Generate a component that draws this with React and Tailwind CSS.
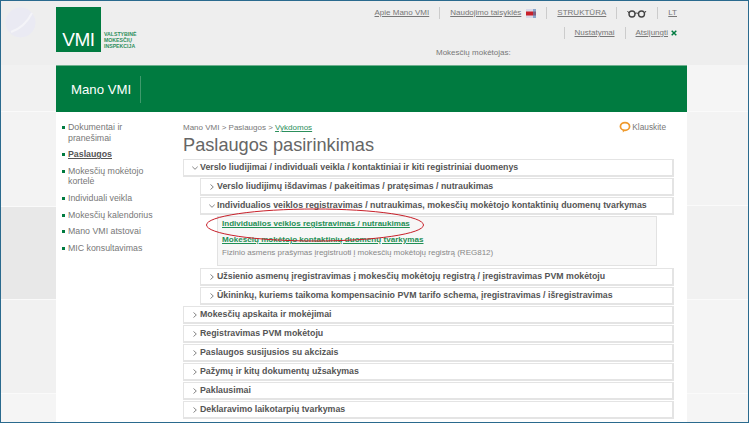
const SANS = "font-['Liberation_Sans',Arial,sans-serif]";

function Chevron({ open }) {
  return (
    <svg width="6" height="6" viewBox="0 0 6 6" className="shrink-0" fill="none" stroke="#666" strokeWidth="0.8">
      {open ? <path d="M0.3 1.7 L3 4.3 L5.7 1.7" /> : <path d="M1.5 0.5 L4.3 3 L1.5 5.5" />}
    </svg>
  );
}

function Row({ open, children }) {
  return (
    <div className="h-[18px] flex items-center bg-white border border-[#e4e4e4] border-b-2 border-r-2 pl-[8px]">
      <Chevron open={open} />
      <span className="ml-[2px] text-[8.8px] font-bold text-[#555] whitespace-nowrap">{children}</span>
    </div>
  );
}

function Band({ className }) {
  return <div className={`border-b border-[#fafafa] ${className}`} />;
}

const texture = "bg-[#f1f1f1] bg-[radial-gradient(#e9e9e9_0.5px,transparent_0.6px)] bg-[length:4px_4px]";

function SideItem({ active, children }) {
  return (
    <li className="flex items-start">
      <span className="mt-[4px] mr-[3px] w-[3px] h-[3px] bg-[#007b40] shrink-0" />
      <span className={active ? "font-bold text-[#555] underline" : "text-[#777]"}>{children}</span>
    </li>
  );
}

function Sep() {
  return <span className="w-px h-[12px] bg-[#ccc]" />;
}

export default function App() {
  return (
    <div className={`${SANS} w-[749px] h-[423px] overflow-hidden border border-[#2a6a8e] bg-white flex flex-col relative`}>
      {/* header */}
      <header className="h-[64px] shrink-0 bg-[#eeeeee] flex">
        <div className="w-[55px] shrink-0 pt-[6px] pl-[4px]">
          <svg width="31" height="31" viewBox="0 0 31 31">
            <circle cx="15.5" cy="15.5" r="15" fill="#eaeaf3" />
            <path d="M6 25 Q20 20 27 6" stroke="#f4f4f8" strokeWidth="2" fill="none" />
          </svg>
        </div>
        <div className="w-[631px] shrink-0 flex relative">
          <div className="mt-[6px] w-[45px] h-[45px] bg-[#007b40] flex items-end justify-center pb-[3px] shrink-0">
            <span className="text-white text-[19px] leading-[19px] tracking-[-0.5px]">VMI</span>
          </div>
          <div className="ml-[3px] mt-[30px] text-[5.2px] leading-[6.2px] font-bold text-[#2c8f5c] whitespace-nowrap">
            VALSTYBINĖ<br />MOKESČIŲ<br />INSPEKCIJA
          </div>
          <div className="ml-auto pr-[10px] pt-[5px] flex flex-col items-end text-[8px] text-[#777] whitespace-nowrap">
            <div className="h-[14px] flex items-center gap-[10px]">
              <span className="underline">Apie Mano VMI</span>
              <Sep />
              <span className="underline flex items-center gap-[5px]">
                Naudojimo taisyklės
                <svg width="10" height="9" viewBox="0 0 10 9">
                  <rect x="0" y="0" width="10" height="9" fill="#d8d8e8" />
                  <rect x="0" y="2.5" width="10" height="4" fill="#c8202a" />
                  <rect x="7" y="0" width="3" height="9" fill="#5588bb" opacity="0.6" />
                </svg>
              </span>
              <Sep />
              <span className="underline">STRUKTŪRA</span>
              <Sep />
              <svg width="20" height="9" viewBox="0 0 20 9" fill="none" stroke="#444" strokeWidth="1.4">
                <circle cx="5" cy="5" r="3" />
                <circle cx="14.5" cy="5" r="3" />
                <path d="M8 4.5 Q9.7 3.5 11.5 4.5 M2 4 L0.5 2 M17.5 4 L19 2" strokeWidth="1" />
              </svg>
              <Sep />
              <span className="underline">LT</span>
            </div>
            <div className="mt-[6px] h-[14px] flex items-center gap-[10px]">
              <Sep />
              <span className="underline">Nustatymai</span>
              <Sep />
              <span className="flex items-center gap-[3px]">
                <span className="underline">Atsijungti</span>
                <svg width="6" height="6" viewBox="0 0 6 6" stroke="#007b40" strokeWidth="1.5"><path d="M0.7 0.7 L5.3 5.3 M5.3 0.7 L0.7 5.3" /></svg>
              </span>
            </div>
          </div>
          <div className="absolute left-[380px] top-[46px] text-[8px] text-[#777] whitespace-nowrap">Mokesčių mokėtojas:</div>
        </div>
        <div className="flex-1" />
      </header>

      {/* body */}
      <div className="flex-1 flex min-h-0">
        <div className="w-[55px] shrink-0 flex flex-col">
          <Band className={`h-[47px] ${texture}`} />
          <Band className="h-[95px] bg-[#f3f3f3]" />
          <Band className="h-[93px] bg-[#e8e8e8]" />
          <Band className={`h-[94px] ${texture}`} />
          <div className="flex-1 bg-[#f5f5f5]" />
        </div>

        <div className="w-[631px] shrink-0 flex flex-col min-h-0">
          <div className="h-[47px] shrink-0 bg-[#007b40] border-t border-[#6fb08f] flex items-center pl-[15px]">
            <span className="text-white text-[13.2px] pr-[9px] h-[27px] leading-[27px] border-r border-[#3f9a6c]">Mano VMI</span>
          </div>
          <div className="flex-1 flex min-h-0">
            <ul className="w-[127px] shrink-0 pl-[6px] pt-[10px] pr-[4px] text-[8.8px] leading-[10.5px] flex flex-col gap-[6.2px]">
              <SideItem>Dokumentai ir<br />pranešimai</SideItem>
              <SideItem active>Paslaugos</SideItem>
              <SideItem>Mokesčių mokėtojo<br />kortelė</SideItem>
              <SideItem>Individuali veikla</SideItem>
              <SideItem>Mokesčių kalendorius</SideItem>
              <SideItem>Mano VMI atstovai</SideItem>
              <SideItem>MIC konsultavimas</SideItem>
            </ul>
            <main className="w-[491px] shrink-0 pt-[10px] relative">
              <div className="flex justify-between items-start h-[11px] text-[8px] leading-[11px] text-[#777]">
                <span>Mano VMI &gt; Paslaugos &gt; <span className="underline text-[#2c8f5c]">Vykdomos</span></span>
                <span className="flex items-center gap-[1px] pr-[8px] text-[8.3px] mt-[-1px]">
                  <svg width="12" height="12" viewBox="0 0 11 11" fill="none">
                    <ellipse cx="5.5" cy="5" rx="4.2" ry="3.5" stroke="#ef9a2d" strokeWidth="1.6" />
                    <path d="M3.5 8 L3.5 10.5 L6 8.3" fill="#ef9a2d" />
                  </svg>
                  Klauskite
                </span>
              </div>
              <h1 className="mt-[0px] h-[26px] text-[18.2px] leading-[24px] font-normal text-[#666] whitespace-nowrap">Paslaugos pasirinkimas</h1>
              <div className="flex flex-col gap-px">
                <Row open>Verslo liudijimai / individuali veikla / kontaktiniai ir kiti registriniai duomenys</Row>
                <div className="pl-[17px] flex flex-col gap-px">
                  <Row>Verslo liudijimų išdavimas / pakeitimas / pratęsimas / nutraukimas</Row>
                  <Row open>Individualios veiklos registravimas / nutraukimas, mokesčių mokėtojo kontaktinių duomenų tvarkymas</Row>
                  <div className="ml-[17px] mr-[17px] mb-px h-[50px] bg-[#f7f7f7] border border-[#e2e2e2] pl-[4px] pt-[1px]">
                    <div className="text-[8.05px] leading-[12px] font-bold text-[#1f8f55] underline">Individualios veiklos registravimas / nutraukimas</div>
                    <div className="mt-[4px] text-[8.1px] leading-[12px] font-bold text-[#1f8f55] underline">Mokesčių mokėtojo kontaktinių duomenų tvarkymas</div>
                    <div className="mt-[1px] text-[8px] leading-[12px] text-[#888]">Fizinio asmens prašymas įregistruoti į mokesčių mokėtojų registrą (REG812)</div>
                  </div>
                  <Row>Užsienio asmenų įregistravimas į mokesčių mokėtojų registrą / įregistravimas PVM mokėtoju</Row>
                  <Row>Ūkininkų, kuriems taikoma kompensacinio PVM tarifo schema, įregistravimas / išregistravimas</Row>
                </div>
                <Row>Mokesčių apskaita ir mokėjimai</Row>
                <Row>Registravimas PVM mokėtoju</Row>
                <Row>Paslaugos susijusios su akcizais</Row>
                <Row>Pažymų ir kitų dokumentų užsakymas</Row>
                <Row>Paklausimai</Row>
                <Row>Deklaravimo laikotarpių tvarkymas</Row>
              </div>
              {/* annotation drawn over the page */}
              <svg className="absolute left-[22px] top-[96px]" width="220" height="34" viewBox="0 0 220 34" fill="none">
                <ellipse cx="110" cy="17" rx="108.5" ry="16" stroke="#c8202a" strokeWidth="1" />
              </svg>
            </main>
          </div>
        </div>

        <div className="flex-1 flex flex-col">
          <Band className="h-[47px] bg-[#f5f5f5]" />
          <Band className="h-[94px] bg-[#f3f3f3]" />
          <Band className={`h-[94px] ${texture}`} />
          <Band className="h-[94px] bg-[#f4f4f4]" />
          <div className="flex-1 bg-[#f5f5f5]" />
        </div>
      </div>
    </div>
  );
}
